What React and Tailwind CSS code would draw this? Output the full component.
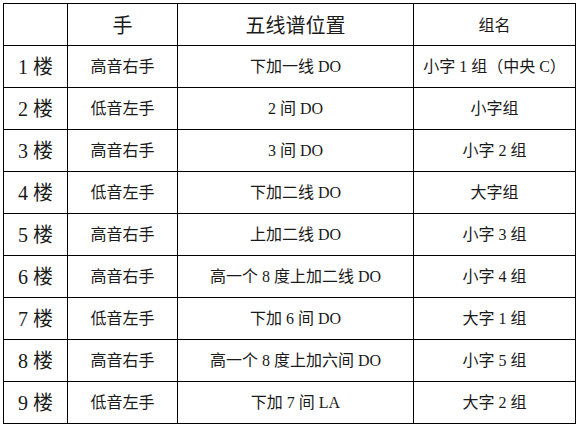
import React from "react";

const rows = [
  ["1", "高音右手", "下加一线 DO", "小字 1 组（中央 C）"],
  ["2", "低音左手", "2 间 DO", "小字组"],
  ["3", "高音右手", "3 间 DO", "小字 2 组"],
  ["4", "低音左手", "下加二线 DO", "大字组"],
  ["5", "高音右手", "上加二线 DO", "小字 3 组"],
  ["6", "高音右手", "高一个 8 度上加二线 DO", "小字 4 组"],
  ["7", "低音左手", "下加 6 间 DO", "大字 1 组"],
  ["8", "高音右手", "高一个 8 度上加六间 DO", "小字 5 组"],
  ["9", "低音左手", "下加 7 间 LA", "大字 2 组"],
];

const font = {
  fontFamily: '"Liberation Serif", "Noto Sans CJK SC", serif',
};

export default function App() {
  return (
    <div className="w-[577px] h-[431px] bg-white pl-[3px] pt-[3px]" style={font}>
      <table className="table-fixed border-collapse w-[572px] text-[#1a1a1a]">
        <colgroup>
          <col className="w-[64px]" />
          <col className="w-[110px]" />
          <col className="w-[236px]" />
          <col className="w-[162px]" />
        </colgroup>
        <thead>
          <tr className="h-[42px]">
            <th className="border border-black font-normal"></th>
            <th className="border border-black font-normal text-[20px] pt-[3px]">手</th>
            <th className="border border-black font-normal text-[20px] pt-[3px]">五线谱位置</th>
            <th className="border border-black font-normal text-[16px] pt-[3px]">组名</th>
          </tr>
        </thead>
        <tbody>
          {rows.map((r) => (
            <tr key={r[0]} className="h-[42px]">
              <td className="border border-black text-center text-[20px]">
                {r[0]} 楼
              </td>
              <td className="border border-black text-center text-[16px]">{r[1]}</td>
              <td className="border border-black text-center text-[16px]">{r[2]}</td>
              <td className="border border-black text-center text-[16px]">{r[3]}</td>
            </tr>
          ))}
        </tbody>
      </table>
    </div>
  );
}
